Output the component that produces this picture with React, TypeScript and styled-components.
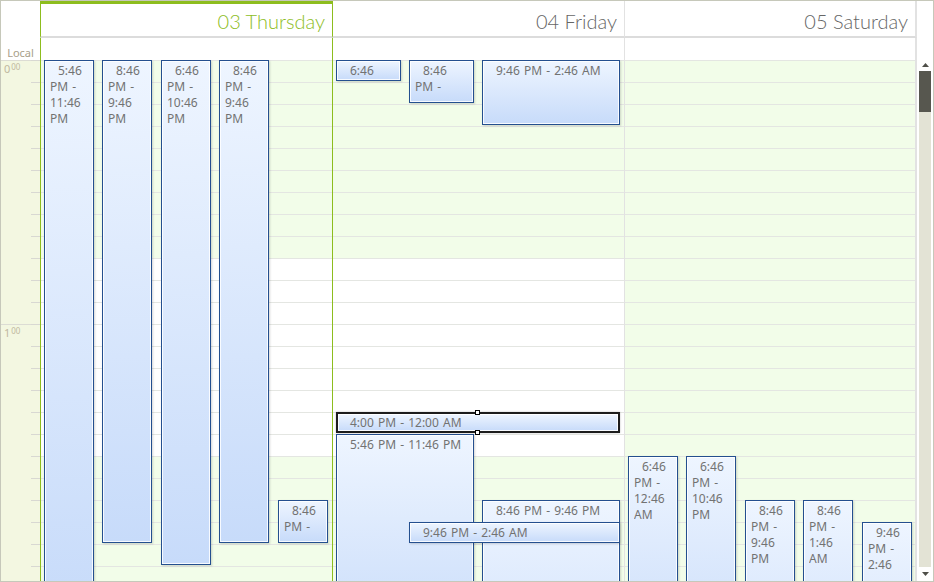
import React from 'react';
import styled, { createGlobalStyle, css } from 'styled-components';

const SLOT = 22;
const BODY_H = 520;
const GREEN = '#8dbd1e';
const WORK_BG = '#f2fde9';
const SEP = '#e2e2e2';

const GlobalStyle = createGlobalStyle`
  html, body { margin: 0; padding: 0; background: #fff; }
  body { font-family: "Noto Sans", "Segoe UI", "Open Sans", sans-serif; }
  * { box-sizing: border-box; }
`;

const Frame = styled.div`
  width: 934px;
  height: 582px;
  border: 1px solid #c6c8ba;
  display: grid;
  grid-template-columns: 39px 293px 292px 292px 16px;
  grid-template-rows: 37px 22px 521px;
  overflow: hidden;
  background: #fff;
`;

const Corner = styled.div`
  grid-row: span 2;
  display: flex;
  align-items: flex-end;
  justify-content: center;
  font-size: 11px;
  line-height: 11px;
  color: #a8a08a;
  padding-bottom: 2px;
`;

const ScrollHead = styled.div`
  grid-row: span 2;
  background: #fff;
`;

type ColProps = { $today?: boolean; $last?: boolean };

const colBorders = css<ColProps>`
  ${(p) =>
    p.$today
      ? `border-left: 1px solid ${GREEN}; border-right: 1px solid ${GREEN};`
      : `border-right: ${p.$last ? 2 : 1}px solid ${SEP};`}
`;

const DayHead = styled.div<ColProps>`
  display: flex;
  justify-content: flex-end;
  align-items: center;
  padding: ${(p) => (p.$today ? 2 : 5)}px 7px 0 0;
  font-family: Lato, "Noto Sans", sans-serif;
  font-size: 20px;
  font-weight: 300;
  white-space: nowrap;
  color: ${(p) => (p.$today ? GREEN : '#666666')};
  border-bottom: 2px solid #dcdcdc;
  ${(p) => (p.$today ? `border-top: 3px solid ${GREEN};` : '')}
  ${colBorders}
`;

const DaySub = styled.div<ColProps>`
  background: #fff;
  ${colBorders}
`;

const DayBody = styled.div<ColProps & { $allWork?: boolean }>`
  position: relative;
  overflow: hidden;
  background:
    repeating-linear-gradient(to bottom, #e4e6e2 0 1px, transparent 1px ${SLOT}px),
    ${(p) =>
      p.$allWork
        ? WORK_BG
        : `linear-gradient(to bottom, ${WORK_BG} 0 ${SLOT * 9}px, #fff ${SLOT * 9}px ${SLOT * 18}px, ${WORK_BG} ${SLOT * 18}px)`};
  ${colBorders}
`;

const RulerBody = styled.div`
  background: #f3f7e1;
  overflow: hidden;
  display: flex;
  flex-direction: column;
`;

const HourBlock = styled.div`
  flex: none;
  height: ${SLOT * 12}px;
  display: flex;
  background: linear-gradient(#dcdcd4, #dcdcd4) top left / 100% 1px no-repeat;
`;

const HourLabel = styled.div`
  flex: 1;
  padding: 3px 0 0 3px;
  color: #c0b79f;
  font-size: 11px;
  line-height: 12px;
`;

const Minutes = styled.span`
  font-size: 8px;
  line-height: 8px;
  vertical-align: top;
  margin-left: 1px;
`;

const Ticks = styled.div`
  width: 9px;
  background: repeating-linear-gradient(to bottom, #d8d8d2 0 1px, transparent 1px ${SLOT}px);
`;

const ScrollCol = styled.div`
  display: flex;
  flex-direction: column;
  align-items: center;
  background: #fff;
`;

const ArrowBtn = styled.div<{ $h: number; $down?: boolean }>`
  flex: none;
  height: ${(p) => p.$h}px;
  width: 100%;
  display: flex;
  justify-content: center;
  align-items: flex-start;
  padding-top: ${(p) => (p.$down ? 5 : 3)}px;
  color: #4e4e48;
`;

const Track = styled.div`
  flex: 1;
  width: 12px;
  background: #e3e3d5;
`;

const Thumb = styled.div`
  height: 41px;
  background: #57574f;
`;

const EventBox = styled.div<{ $selected?: boolean }>`
  position: absolute;
  border: 1px solid #244f8f;
  background: linear-gradient(to bottom, #eef5ff, #c7dbfa);
  box-shadow: inset 0 0 0 1px rgba(255, 255, 255, 0.85), 1px 1px 2px rgba(0, 0, 0, 0.16);
  padding: 2px 10px 0 5px;
  font-size: 12px;
  line-height: 16px;
  color: #727272;
  ${(p) =>
    p.$selected &&
    css`
      border: 2px solid #1c1c1c;
      padding: 1px 10px 0 4px;
      box-shadow: inset 0 0 0 1px rgba(255, 255, 255, 0.85), 0 0 2px rgba(0, 0, 0, 0.25);
      z-index: 2;
    `}
`;

const EventText = styled.div`
  text-indent: 8px;
  word-spacing: 1px;
  overflow: hidden;
`;

const Handle = styled.span<{ $pos: 'top' | 'bottom' }>`
  position: absolute;
  left: 50%;
  width: 5px;
  height: 5px;
  margin-left: -3px;
  background: #fff;
  border: 1px solid #000;
  ${(p) => (p.$pos === 'top' ? 'top: -4px;' : 'bottom: -4px;')}
`;

type Ev = { l: number; w: number; s: number; n: number; t: string; sel?: boolean };

type Day = { label: string; today?: boolean; allWork?: boolean; last?: boolean; events: Ev[] };

const days: Day[] = [
  {
    label: '03 Thursday',
    today: true,
    events: [
      { l: 3, w: 50, s: 0, n: 25, t: '5:46 PM - 11:46 PM' },
      { l: 61, w: 50, s: 0, n: 22, t: '8:46 PM - 9:46 PM' },
      { l: 120, w: 50, s: 0, n: 23, t: '6:46 PM - 10:46 PM' },
      { l: 178, w: 50, s: 0, n: 22, t: '8:46 PM - 9:46 PM' },
      { l: 237, w: 50, s: 20, n: 2, t: '8:46 PM -' },
    ],
  },
  {
    label: '04 Friday',
    events: [
      { l: 3, w: 65, s: 0, n: 1, t: '6:46' },
      { l: 76, w: 65, s: 0, n: 2, t: '8:46 PM -' },
      { l: 149, w: 138, s: 0, n: 3, t: '9:46 PM - 2:46 AM' },
      { l: 3, w: 284, s: 16, n: 1, t: '4:00 PM - 12:00 AM', sel: true },
      { l: 3, w: 138, s: 17, n: 10, t: '5:46 PM - 11:46 PM' },
      { l: 149, w: 138, s: 20, n: 10, t: '8:46 PM - 9:46 PM' },
      { l: 76, w: 211, s: 21, n: 1, t: '9:46 PM - 2:46 AM' },
    ],
  },
  {
    label: '05 Saturday',
    allWork: true,
    last: true,
    events: [
      { l: 3, w: 50, s: 18, n: 10, t: '6:46 PM - 12:46 AM' },
      { l: 61, w: 50, s: 18, n: 10, t: '6:46 PM - 10:46 PM' },
      { l: 120, w: 50, s: 20, n: 10, t: '8:46 PM - 9:46 PM' },
      { l: 178, w: 50, s: 20, n: 10, t: '8:46 PM - 1:46 AM' },
      { l: 237, w: 50, s: 21, n: 10, t: '9:46 PM - 2:46' },
    ],
  },
];

const LINE = 16;

function EventItem({ ev }: { ev: Ev }) {
  const top = ev.s * SLOT;
  const height = ev.n * SLOT - 1;
  const inset = ev.sel ? 5 : 3;
  const shown = Math.min(height, BODY_H - top);
  const lines = Math.max(1, Math.floor((shown - inset) / LINE));
  return (
    <EventBox $selected={ev.sel} style={{ left: ev.l, top, width: ev.w, height }}>
      <EventText style={{ maxHeight: lines * LINE }}>{ev.t}</EventText>
      {ev.sel && (
        <>
          <Handle $pos="top" />
          <Handle $pos="bottom" />
        </>
      )}
    </EventBox>
  );
}

const UpArrow = () => (
  <svg width="7" height="4" viewBox="0 0 7 4">
    <polygon points="3.5,0 7,4 0,4" fill="currentColor" />
  </svg>
);

const DownArrow = () => (
  <svg width="7" height="4" viewBox="0 0 7 4">
    <polygon points="0,0 7,0 3.5,4" fill="currentColor" />
  </svg>
);

export default function App() {
  return (
    <>
      <GlobalStyle />
      <Frame>
        <Corner>Local</Corner>
        {days.map((d) => (
          <DayHead key={d.label} $today={d.today} $last={d.last}>
            {d.label}
          </DayHead>
        ))}
        <ScrollHead />
        {days.map((d) => (
          <DaySub key={d.label} $today={d.today} $last={d.last} />
        ))}
        <RulerBody>
          {[0, 1].map((h) => (
            <HourBlock key={h}>
              <HourLabel>
                {h}
                <Minutes>00</Minutes>
              </HourLabel>
              <Ticks />
            </HourBlock>
          ))}
        </RulerBody>
        {days.map((d) => (
          <DayBody key={d.label} $today={d.today} $last={d.last} $allWork={d.allWork}>
            {d.events.map((ev, i) => (
              <EventItem key={i} ev={ev} />
            ))}
          </DayBody>
        ))}
        <ScrollCol>
          <ArrowBtn $h={11}>
            <UpArrow />
          </ArrowBtn>
          <Track>
            <Thumb />
          </Track>
          <ArrowBtn $h={14} $down>
            <DownArrow />
          </ArrowBtn>
        </ScrollCol>
      </Frame>
    </>
  );
}
